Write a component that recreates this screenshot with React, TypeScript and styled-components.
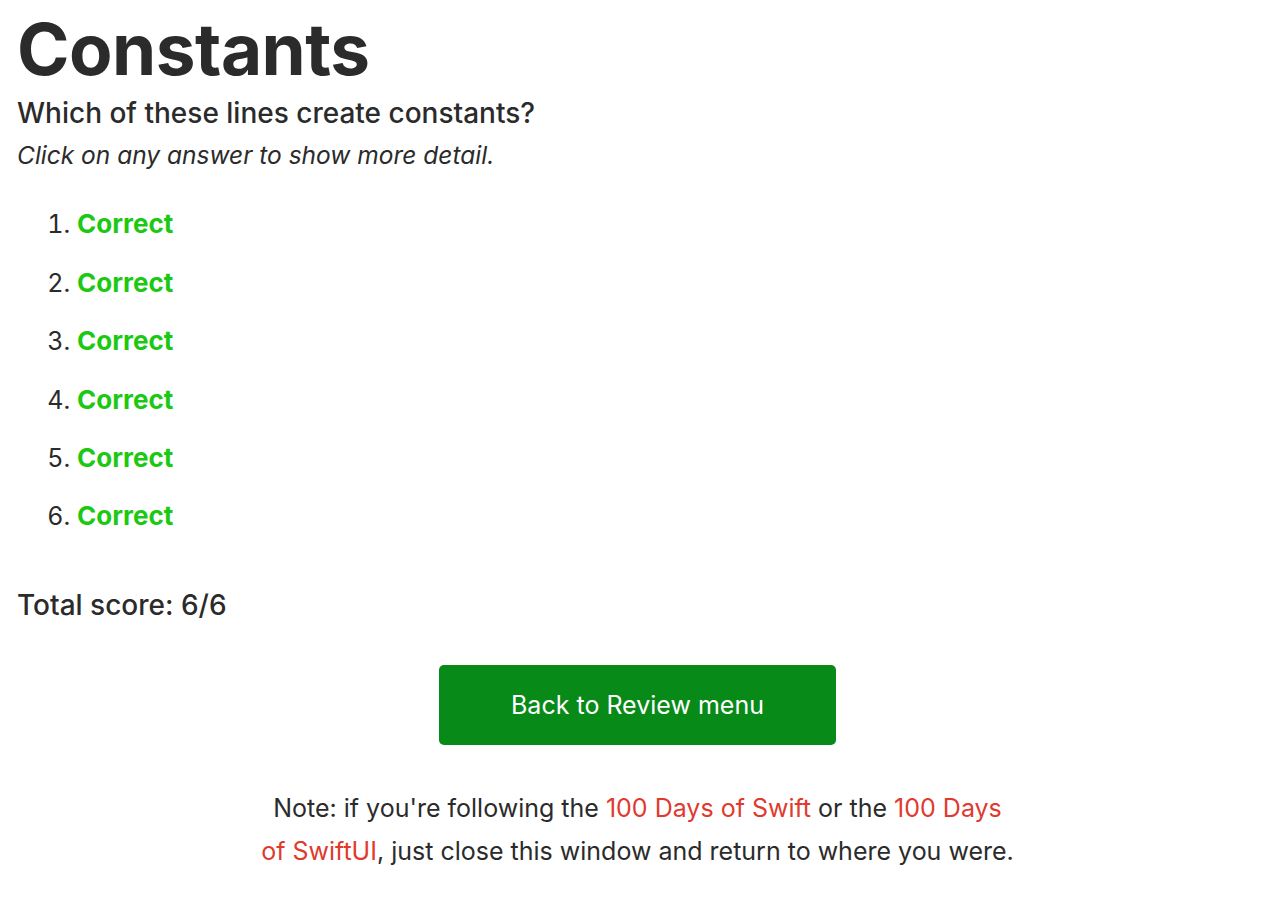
import React from "react";
import styled, { createGlobalStyle } from "styled-components";

const Global = createGlobalStyle`
  html, body { margin: 0; padding: 0; background: #fff; }
  body { font-family: Inter, "Noto Sans", sans-serif; color: #2b2b2b; }
`;

const Page = styled.main`
  padding: 0 22px 40px 17px;
`;

const Title = styled.h1`
  font-size: 71px;
  font-weight: 700;
  line-height: 1;
  margin: 14px 0 0;
  letter-spacing: -0.5px;
`;

const Question = styled.h2`
  font-size: 28px;
  font-weight: 500;
  line-height: 1.2;
  margin: 12px 0 0;
`;

const Hint = styled.p`
  font-size: 24.5px;
  font-style: italic;
  margin: 9px 0 0;
  line-height: 1.3;
`;

const List = styled.ol`
  margin: 36px 0 0;
  padding-left: 60px;
  font-size: 25px;
  line-height: 34px;
`;

const Item = styled.li`
  margin-bottom: 24.4px;
  &::marker { color: #2b2b2b; }
`;

const Result = styled.span<{ $ok: boolean }>`
  font-size: 26px;
  font-weight: 700;
  color: ${(p) => (p.$ok ? "#1bc912" : "#d43a2c")};
`;

const Score = styled.p`
  font-size: 28px;
  font-weight: 500;
  margin: 54px 0 0;
  line-height: 1.3;
`;

const ButtonRow = styled.div`
  display: flex;
  justify-content: center;
  margin-top: 41px;
`;

const Button = styled.button`
  width: 397px;
  height: 80px;
  border: none;
  border-radius: 5px;
  background: #078a18;
  color: #fff;
  font-family: Inter, "Noto Sans", sans-serif;
  font-size: 25px;
  cursor: pointer;
`;

const Note = styled.p`
  max-width: 780px;
  margin: 42px auto 0;
  text-align: center;
  font-size: 25px;
  line-height: 43px;
`;

const Link = styled.a`
  color: #e03a2f;
  text-decoration: none;
`;

export default function App() {
  const results = [true, true, true, true, true, true];
  return (
    <>
      <Global />
      <Page>
        <Title>Constants</Title>
        <Question>Which of these lines create constants?</Question>
        <Hint>Click on any answer to show more detail.</Hint>
        <List>
          {results.map((ok, i) => (
            <Item key={i}>
              <Result $ok={ok}>{ok ? "Correct" : "Wrong"}</Result>
            </Item>
          ))}
        </List>
        <Score>Total score: 6/6</Score>
        <ButtonRow>
          <Button>Back to Review menu</Button>
        </ButtonRow>
        <Note>
          Note: if you're following the <Link href="#">100 Days of Swift</Link> or the{" "}
          <Link href="#">
            100 Days
            <br />
            of SwiftUI
          </Link>
          , just close this window and return to where you were.
        </Note>
      </Page>
    </>
  );
}
